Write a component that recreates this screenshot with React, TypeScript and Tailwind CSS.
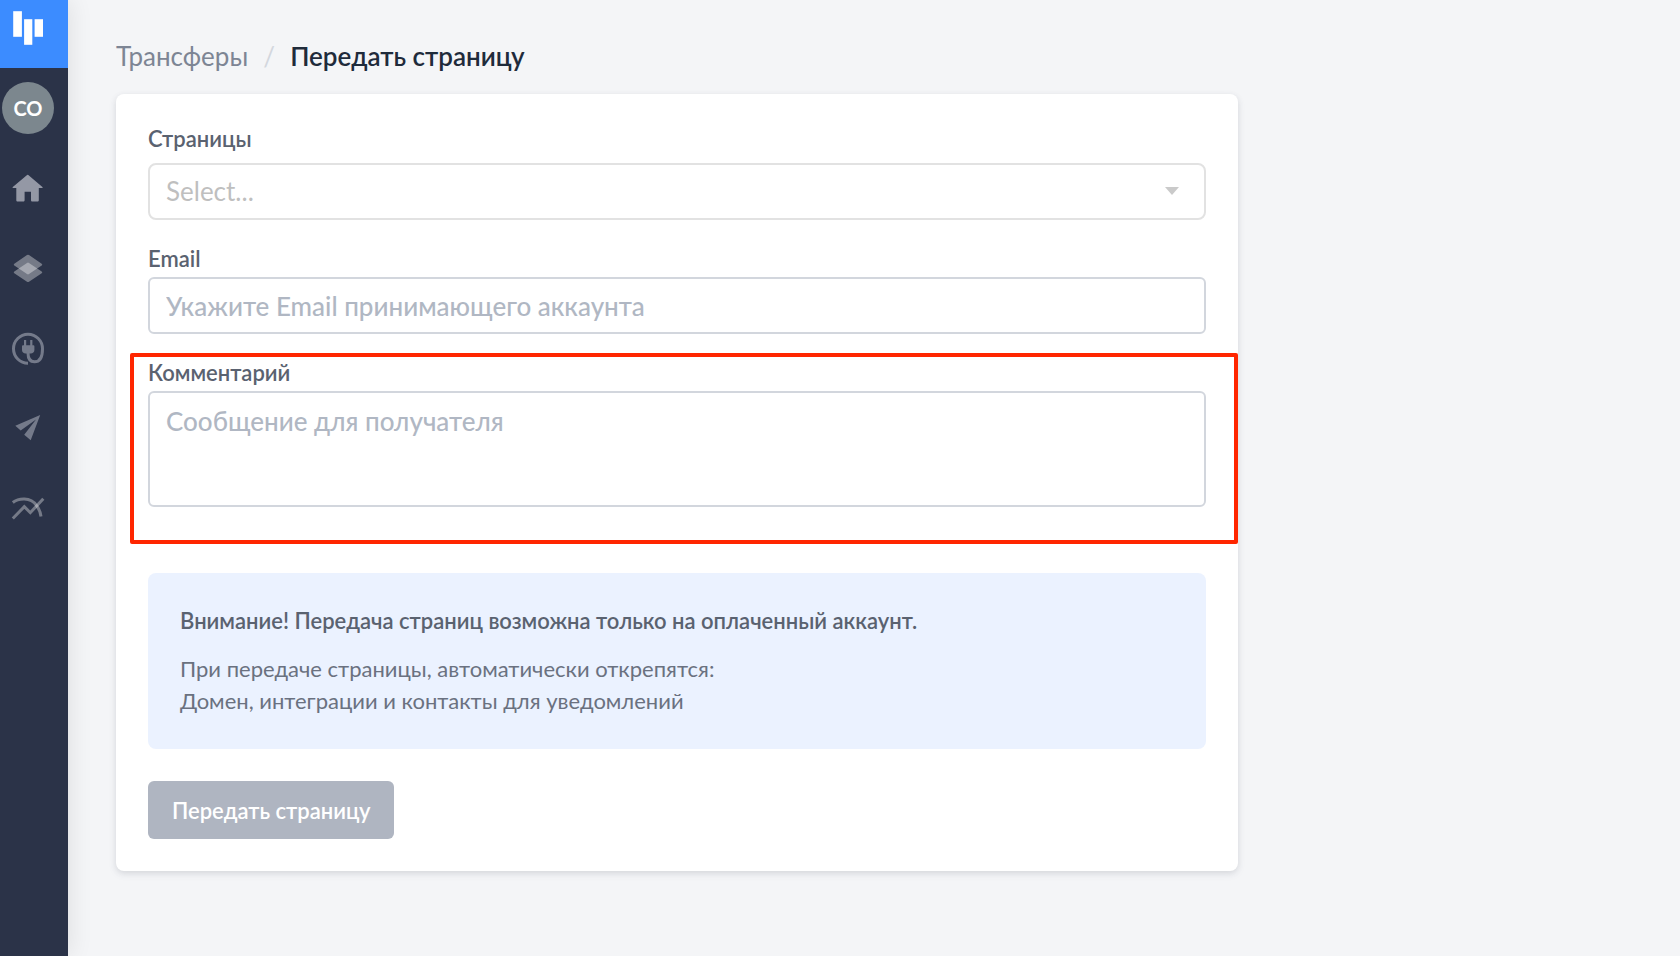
import React from "react";

const navLinks = [
  {
    label: "Главная",
    icon: (
      <path
        fill="#9498a5"
        d="M17.1 5a1 1 0 0 1 1.2 0L32.4 16.9c.5.4.2 1.1-.4 1.1h-3.2v12.2c0 .8-.6 1.3-1.3 1.3h-5.2c-.7 0-1.3-.5-1.3-1.3v-8.5h-6.4v8.5c0 .8-.6 1.3-1.3 1.3H7.6c-.7 0-1.3-.5-1.3-1.3V18H3.2c-.6 0-.8-.7-.4-1.1z"
      />
    ),
  },
  {
    label: "Страницы",
    icon: (
      <g fill="#fff" fillOpacity="0.35">
        <path d="M17 5.100q1-.7 2 0l12.700 8.600q1.200.9 0 1.800L19 24.100q-1 .7-2 0L4.300 15.500q-1.200-.9 0-1.800z" />
        <path d="M17 12.900q1-.7 2 0l12.700 8.600q1.200.9 0 1.800L19 31.700q-1 .7-2 0L4.300 23.300q-1.200-.9 0-1.800z" />
      </g>
    ),
  },
  {
    label: "Интеграции",
    icon: (
      <g fill="none" stroke="#747a8a" strokeWidth="3">
        <path d="M18 33.200A14.500 14.500 0 1 1 32.500 18.700C32.500 26.500 30 31.800 24.500 31.800C20 31.800 18 28.500 18 23" />
        <path
          fill="#747a8a"
          stroke="none"
          d="M14 10h2.200v5.300h4V10h2.200v5.300h1.100c.5 0 .9.4.9.9V20c0 2.200-1.600 3.600-3.600 3.600h-5.200c-2 0-3.600-1.400-3.600-3.600v-3.800c0-.5.4-.9.9-.9H14z"
        />
      </g>
    ),
  },
  {
    label: "Рассылки",
    icon: (
      <path
        fill="#747a8a"
        d="M30.200 5L5.300 15.700L10.700 20.500L26 9.600L14.200 24.800L20.700 30.200z"
      />
    ),
  },
  {
    label: "Аналитика",
    icon: (
      <g fill="none" stroke="#fff" strokeOpacity="0.35" strokeWidth="3">
        <path d="M2.800 12.500C8 8.300 20.500 6.300 26.500 15.500C29.500 19.500 30.600 22 31 26.500" />
        <path d="M2.800 28.500L14.300 16.700L20.300 22.700L33.300 8.700" />
      </g>
    ),
  },
];

function Sidebar() {
  return (
    <aside className="flex w-[68px] shrink-0 flex-col bg-[#2b3348] shadow-[2px_0_24px_rgba(0,0,0,0.09)]">
      <a href="#" aria-label="На главную" className="flex h-[68px] bg-[#3c8cff] pl-2.5">
        <svg viewBox="0 0 36 56" className="h-14 w-9" fill="#fff">
          <rect x="3.200" y="11.200" width="8.700" height="25.600" />
          <rect x="14.100" y="19.200" width="8.200" height="25.600" />
          <rect x="24.600" y="19.200" width="8.400" height="17.600" />
        </svg>
      </a>
      <div className="flex h-20 items-center pl-0.5">
        <button
          type="button"
          className="size-[52px] rounded-full bg-[#7c878e] text-center text-xl font-bold text-white"
        >
          CO
        </button>
      </div>
      <nav className="flex flex-col">
        {navLinks.map((link) => (
          <a
            key={link.label}
            href="#"
            aria-label={link.label}
            className="flex h-20 items-center pl-2.5"
          >
            <svg viewBox="0 0 36 36" className="size-9">
              {link.icon}
            </svg>
          </a>
        ))}
      </nav>
    </aside>
  );
}

export default function App() {
  return (
    <div className="flex min-h-screen bg-[#f4f5f7] font-['Lato',sans-serif] text-[22px] text-[#5a6270]">
      <Sidebar />
      <main className="min-w-0 grow px-12 pt-10 pb-12">
        <nav className="flex text-[26px] leading-8">
          <a href="#" className="text-[#7d8594]">
            Трансферы
          </a>
          <span className="w-[42px] text-center text-[#d3d7de]">/</span>
          <h1 className="font-semibold text-[#1f2b3b]">Передать страницу</h1>
        </nav>

        <form className="mt-[22px] max-w-[1122px] rounded-lg bg-white p-8 shadow-[0_2px_6px_rgba(0,0,0,0.08),0_3px_8px_rgba(60,80,110,0.08)]">
          <div>
            <label htmlFor="pages" className="block leading-[26px] font-semibold">
              Страницы
            </label>
            <div className="relative mt-[11px]">
              <select
                id="pages"
                defaultValue=""
                className="block h-[57px] w-full appearance-none rounded-lg border-2 border-[#e2e2e2] bg-white px-4 text-[26px] text-[#bfbfbf]"
              >
                <option value="">Select...</option>
              </select>
              <svg
                viewBox="0 0 14 8"
                className="pointer-events-none absolute top-6 right-[27px] h-2 w-3.5"
              >
                <path fill="#cacaca" d="M0 0h14L7 8z" />
              </svg>
            </div>
          </div>

          <div className="mt-[26px]">
            <label htmlFor="email" className="block leading-[26px] font-semibold">
              Email
            </label>
            <input
              id="email"
              type="email"
              placeholder="Укажите Email принимающего аккаунта"
              className="mt-[5px] block h-[57px] w-full rounded-md border-2 border-[#d2d6dd] bg-white px-4 text-[26px] font-medium placeholder:text-[#b0b7c3]"
            />
          </div>

          <div className="relative mt-[26px]">
            <label htmlFor="comment" className="block leading-[26px] font-semibold">
              Комментарий
            </label>
            <textarea
              id="comment"
              placeholder="Сообщение для получателя"
              className="mt-[5px] block h-[116px] w-full resize-none rounded-md border-2 border-[#d2d6dd] bg-white px-4 py-3 text-[26px] leading-8 font-medium placeholder:text-[#b0b7c3]"
            />
            <div className="pointer-events-none absolute -top-[7px] -right-8 -bottom-[37px] -left-[18px] rounded-xs border-4 border-[#ff2600]" />
          </div>

          <div className="mt-[66px] rounded-lg bg-[#ebf2ff] p-8 leading-8">
            <p className="font-semibold">
              Внимание! Передача страниц возможна только на оплаченный аккаунт.
            </p>
            <p className="mt-4 text-[#6a7180]">
              При передаче страницы, автоматически открепятся:
              <br />
              Домен, интеграции и контакты для уведомлений
            </p>
          </div>

          <button
            type="button"
            className="mt-8 block h-[58px] rounded-md bg-[#afb5c1] px-6 font-semibold text-white"
          >
            Передать страницу
          </button>
        </form>
      </main>
    </div>
  );
}
